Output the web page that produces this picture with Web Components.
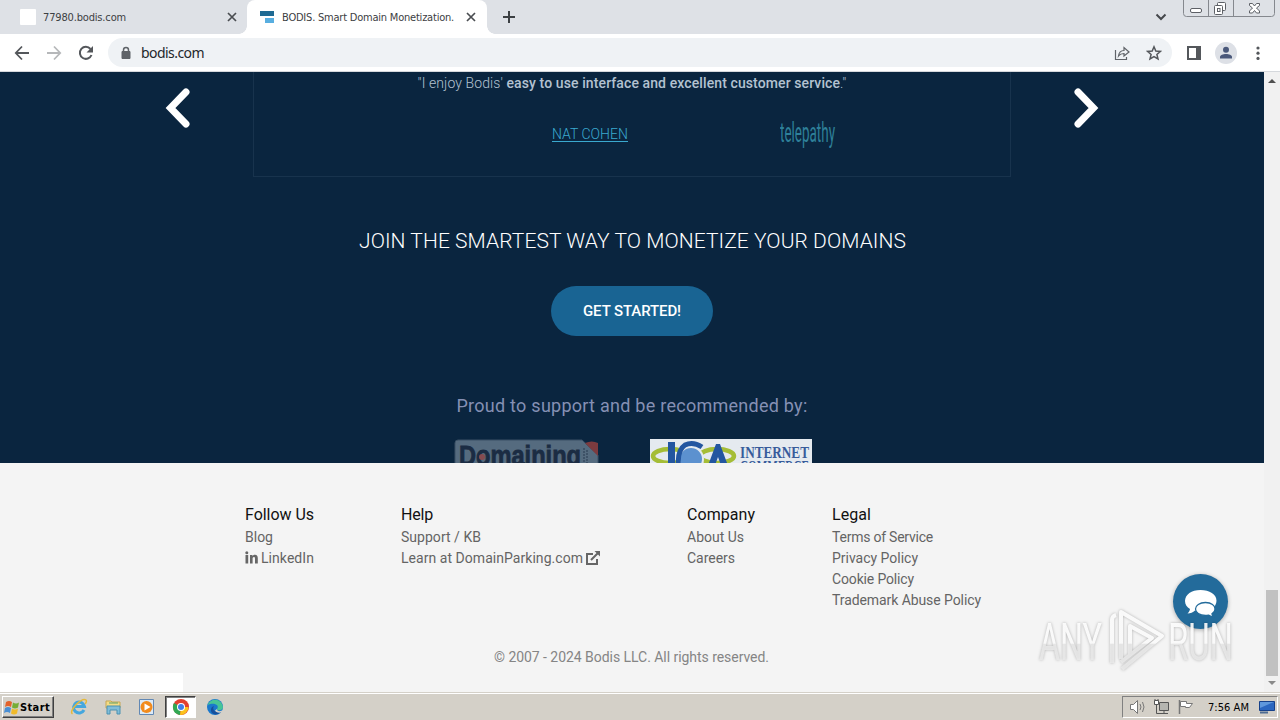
<!DOCTYPE html>
<html lang="en">
<head>
<meta charset="utf-8">
<title>BODIS. Smart Domain Monetization.</title>
<style>
  html, body {
    margin: 0;
    width: 1280px;
    height: 720px;
    overflow: hidden;
  }

  body {
    display: flex;
    flex-direction: column;
    position: relative;
    background: #f4f4f4;
    font-family: Roboto, "Liberation Sans", sans-serif;
  }
</style>
</head>
<body>
  <tab-strip>
    <browser-tab width="247">
      <svg slot="icon" width="16" height="16"><rect width="16" height="16" rx="1" fill="#fff"/></svg>
      <fit-text width="83">77980.bodis.com</fit-text>
    </browser-tab>
    <browser-tab width="240" active>
      <svg slot="icon" width="16" height="16"><path d="M0 2h14v5H0z" fill="#1f6a93"/><path d="M5 9h9v5H5z" fill="#58aee0"/></svg>
      <fit-text width="172">BODIS. Smart Domain Monetization.</fit-text>
    </browser-tab>
  </tab-strip>
  <browser-toolbar><fit-text width="63">bodis.com</fit-text></browser-toolbar>
  <page-view>
    <promo-section></promo-section>
    <page-footer></page-footer>
  </page-view>
  <task-bar></task-bar>
  <chat-button></chat-button>
  <any-run></any-run>

<script>
class BaseElement extends HTMLElement {
  constructor() {
    super();
    const template = document.createElement('template');
    template.innerHTML = this.constructor.markup;
    this.attachShadow({ mode: 'open' });
    this.shadowRoot.appendChild(template.content.cloneNode(true));
  }
}

class TabStrip extends BaseElement {
  static markup = `
<style>
  :host {
    display: flex;
    flex: none;
    height: 34px;
    background: #dee1e6;
    color: #3c4043;
  }
  .plus { margin: 10px 0 0 15px; }
  .right { display: flex; margin-left: auto; padding-right: 5px; }
  .more { margin: 13px 16px 0 0; }
</style>
<slot></slot>
<svg class="plus" width="14" height="14" stroke="#3c4043" stroke-width="2"><path d="M7 1v12M1 7h12"/></svg>
<div class="right">
  <svg class="more" width="12" height="8" fill="none" stroke="#45484c" stroke-width="2"><path d="M1.500 1.500 6 6l4.500-4.500"/></svg>
  <svg width="92" height="17" fill="none" stroke="#85888e">
    <path d="M.5 0v13.500q0 3 3 3h85q3 0 3-3V0M25.500 0v16M50.500 0v16"/>
    <rect x="7.500" y="8.500" width="11" height="4" rx="1.500" fill="#fff" stroke="#5d6066"/>
    <rect x="34.500" y="2.500" width="8" height="8" rx="1" fill="#fff" stroke="#5d6066"/>
    <rect x="31.500" y="5.500" width="8" height="9" rx="1" fill="#fff" stroke="#5d6066"/>
    <rect x="34.500" y="8.500" width="2.500" height="3" stroke="#5d6066"/>
    <path d="M66.500 3.500h3l2 2.500 2-2.500h3v2L73.500 8l3 3v2h-3l-2-2.500-2 2.500h-3v-2l3-3-3-2.500z" fill="#fff" stroke="#5d6066"/>
  </svg>
</div>`;
}

class BrowserTab extends BaseElement {
  static markup = `
<style>
  :host {
    display: flex;
    flex: none;
    align-items: center;
    box-sizing: border-box;
    height: 34px;
    padding: 0 10px 0 20px;
    font: 11px "DejaVu Sans Condensed", sans-serif;
    position: relative;
  }
  :host([active]) {
    padding: 0 10px 0 13px;
    background: #fff;
    border-radius: 8px 8px 0 0;
  }
  /* curved feet of the selected tab */
  :host([active])::before, :host([active])::after {
    content: "";
    position: absolute;
    bottom: 0;
    width: 8px;
    height: 8px;
    left: -8px;
    background: radial-gradient(circle at 0 0, #dee1e6 7.500px, #fff 8px);
  }
  :host([active])::after {
    left: 100%;
    background: radial-gradient(circle at 100% 0, #dee1e6 7.500px, #fff 8px);
  }
  .label { margin-left: 7px; }
  :host([active]) .label { margin-left: 6px; }
  .close { margin-left: auto; }
  :host([active]) .close { margin-right: 1px; }
</style>
<slot name="icon"></slot>
<span class="label"><slot></slot></span>
<svg class="close" width="10" height="10" stroke="#4a4d51" stroke-width="1.700"><path d="M1 1l8 8M9 1 1 9"/></svg>`;

  connectedCallback() {
    this.style.width = this.getAttribute('width') + 'px';
  }
}

class BrowserToolbar extends BaseElement {
  static markup = `
<style>
  :host {
    display: flex;
    flex: none;
    align-items: center;
    box-sizing: border-box;
    height: 38px;
    padding: 0 15px 0 14px;
    background: #fff;
    border-bottom: 1px solid #d5d8dc;
  }
  .nav { display: flex; gap: 16px; }
  .omnibox {
    display: flex;
    flex: 1;
    align-items: center;
    box-sizing: border-box;
    height: 29px;
    margin: 0 15px 0 14px;
    padding: 0 10px 0 13px;
    border-radius: 15px;
    background: #eff2f5;
    color: #24272b;
    font: 14px "Noto Sans", sans-serif;
  }
  .url { flex: 1; margin-left: 10px; }
  .omnibox svg + svg { margin-left: 16px; }
  .actions { display: flex; align-items: center; gap: 14px; }
</style>
<div class="nav">
  <svg width="16" height="16" fill="none" stroke="#54575b" stroke-width="1.800"><path d="M15 8H2M8 1.500 1.800 8 8 14.500"/></svg>
  <svg width="16" height="16" fill="none" stroke="#b6b8ba" stroke-width="1.800"><path d="M1 8h13M8 1.500 14.200 8 8 14.500"/></svg>
  <svg width="16" height="16" fill="none" stroke="#54575b" stroke-width="2"><path d="M13.500 10A6 6 0 1 1 12.500 4"/><path d="M15 1v6.500H8.500z" fill="#54575b" stroke="none"/></svg>
</div>
<div class="omnibox">
  <svg width="10" height="14"><path d="M1 5.500h8v7H1z" fill="#5f6368" stroke="#5f6368" stroke-linejoin="round"/><path d="M2.500 6V4a2.500 2.500 0 0 1 5 0v2" fill="none" stroke="#5f6368" stroke-width="1.500"/></svg>
  <span class="url"><slot></slot></span>
  <svg width="16" height="16" fill="none" stroke="#5f6368" stroke-width="1.200"><path d="M1.500 5v9.500h11V12M4.500 11C5 7 7 5.500 10 5.500V2.500L15 7l-5 4V8.500c-2.500 0-4 .5-5.500 2.500z"/></svg>
  <svg width="16" height="16" fill="none" stroke="#54575b" stroke-width="1.500"><path d="M8 1.800l1.800 4.200 4.600.4-3.500 3 1.100 4.500L8 11.500l-4 2.400 1.100-4.500-3.500-3L6.200 6z"/></svg>
</div>
<div class="actions">
  <svg width="14" height="14"><path d="M1 1h12v12H1z" fill="none" stroke="#54575b" stroke-width="2"/><path d="M9 1h4v12H9z" fill="#54575b"/></svg>
  <svg width="22" height="22"><circle cx="11" cy="11" r="11" fill="#dde0e6"/><circle cx="11" cy="7.800" r="3" fill="#4a587a"/><path d="M5 16.500V15c0-2 3-3 6-3s6 1 6 3v1.500z" fill="#4a587a"/></svg>
  <svg width="14" height="14" fill="#54575b"><circle cx="7" cy="2" r="1.600"/><circle cx="7" cy="7.200" r="1.600"/><circle cx="7" cy="12.400" r="1.600"/></svg>
</div>`;
}

class PageView extends BaseElement {
  static markup = `
<style>
  :host { display: flex; flex: none; height: 620px; }
  .content { display: flex; flex-direction: column; width: 1264px; }
  .scrollbar {
    display: flex;
    flex-direction: column;
    align-items: center;
    width: 16px;
    background: #f1f1f1;
  }
  .up { margin-top: 7px; }
  .thumb { width: 12px; height: 86px; margin-top: 507px; background: #c1c1c1; }
  .down { margin-top: 5px; }
</style>
<div class="content"><slot></slot></div>
<div class="scrollbar">
  <svg class="up" width="8" height="4"><path d="M0 4l4-4 4 4z" fill="#505050"/></svg>
  <div class="thumb"></div>
  <svg class="down" width="8" height="4"><path d="M0 0l4 4 4-4z" fill="#8a8a8a"/></svg>
</div>`;
}

class PromoSection extends BaseElement {
  static markup = `
<style>
  :host {
    display: flex;
    flex-direction: column;
    flex: none;
    align-items: center;
    height: 391px;
    overflow: hidden;
    background: #0a253f;
    color: #fff;
  }
  :host > * { flex: none; }
  .carousel { display: flex; width: 934px; height: 106px; }
  .carousel > svg { flex: none; margin-top: 16px; }
  .card {
    box-sizing: border-box;
    width: 758px;
    height: 105px;
    margin: 0 63px;
    border: 1px solid #18334d;
    border-top: 0;
    text-align: center;
  }
  .quote { height: 22px; font-size: 14px; line-height: 22px; color: #b3c2d1; font-weight: 300; }
  .quote b { font-weight: 500; }
  .author {
    display: flex;
    align-items: center;
    height: 36px;
    padding: 22px 174px 0 298px;
    justify-content: space-between;
    font-size: 14px;
    line-height: 16px;
  }
  .author a { height: 15px; border-bottom: 1px solid #3aa9cf; color: #3aa9cf; font-weight: 300; }
  h2 { margin: 51px 0 0 1px; font-size: 21px; font-weight: 300; line-height: 24px; }
  button {
    width: 162px;
    height: 50px;
    margin: 33px 0 0;
    padding: 0;
    border: 0;
    border-radius: 25px;
    background: #196493;
    color: #fff;
    font: 500 15px Roboto, sans-serif;
  }
  p { margin: 58px 0 0; color: #8590b4; font-size: 18px; line-height: 24px; }
  .badges { display: flex; gap: 50px; margin: 21px 0 0 1px; }
</style>
<div class="carousel">
  <svg width="25" height="40" fill="none" stroke="#fff" stroke-width="7" stroke-linecap="round"><path d="M21 4 5.500 20 21 36"/></svg>
  <div class="card">
    <div class="quote"><fit-text width="429">"I enjoy Bodis' <b>easy to use interface and excellent customer service</b>."</fit-text></div>
    <div class="author">
      <a><fit-text width="76">NAT COHEN</fit-text></a>
      <svg width="56" height="34" font-family="Roboto, sans-serif" fill="#2e8099">
        <text x="0" y="25" font-size="27" textLength="55" lengthAdjust="spacingAndGlyphs">telepathy</text>
      </svg>
    </div>
  </div>
  <svg width="25" height="40" fill="none" stroke="#fff" stroke-width="7" stroke-linecap="round"><path d="M4 4l15.500 16L4 36"/></svg>
</div>
<h2><fit-text width="547">JOIN THE SMARTEST WAY TO MONETIZE YOUR DOMAINS</fit-text></h2>
<button><fit-text width="98">GET STARTED!</fit-text></button>
<p><fit-text width="351">Proud to support and be recommended by:</fit-text></p>
<div class="badges">
  <svg width="146" height="40" font-family="Liberation Sans, sans-serif" font-weight="bold">
    <path d="M1 4q0-3 3-3h124l16 15v30H1z" fill="#556b7f" stroke="#3a5066"/>
    <path d="M131 4q7-3 13 0v13z" fill="#7c3b3f"/>
    <text x="5" y="26" font-size="28" fill="#1b2c43" stroke="#1b2c43" stroke-width=".8" textLength="122" lengthAdjust="spacingAndGlyphs">Domaining</text>
    <circle cx="28" cy="18" r="3" fill="#854b50"/>
    <path d="M130 9v14M133 11v14" stroke="#283a50" stroke-dasharray="2 1"/>
  </svg>
  <svg width="162" height="40" font-family="Liberation Serif, serif" font-weight="bold">
    <path d="M0 0h162v40H0z" fill="#e5eaef"/>
    <g fill="none" stroke="#a5bd36" stroke-width="4.500"><ellipse cx="20" cy="17" rx="17" ry="7"/><ellipse cx="67" cy="17" rx="17" ry="7"/></g>
    <path d="M18 3h7v30h-7z" fill="#2356a0"/>
    <circle cx="41" cy="20" r="12" fill="#5c91cf" stroke="#e5eaef" stroke-width="2"/>
    <path d="M52 8Q43 2 35 6q-9 6-6 25" fill="none" stroke="#2356a0" stroke-width="5"/>
    <path d="M56 32 66 5h4l10 27h-7l-5-14-5 14z" fill="#2356a0"/>
    <g font-size="17" fill="#385c9b"><text x="90" y="19" textLength="69" lengthAdjust="spacingAndGlyphs">INTERNET</text><text x="90" y="33" font-size="16" textLength="69" lengthAdjust="spacingAndGlyphs">COMMERCE</text></g>
  </svg>
</div>`;
}

class PageFooter extends BaseElement {
  static markup = `
<style>
  :host {
    display: flex;
    flex-direction: column;
    flex: 1;
    background: #f4f4f4;
  }
  .columns {
    display: grid;
    grid-template-columns: 156px 286px 145px 1fr;
    height: 143px;
    padding: 41px 0 0 245px;
  }
  .columns svg { margin-top: 3px; }
  .copyright {
    padding-right: 1px;
    text-align: center;
    color: #858585;
    font-size: 14px;
    line-height: 20px;
  }
  .status { width: 183px; height: 19px; margin-top: auto; background: #fff; }
</style>
<div class="columns">
  <link-column>
    <fit-text slot="title" width="69">Follow Us</fit-text>
    <div><fit-text width="28">Blog</fit-text></div>
    <div><svg width="13" height="13" fill="#666"><path d="M.5 4h2.700v8.500H.5zM5 4h2.500v1.200C8.200 4.200 9 3.800 10 3.800c2 0 2.800 1.200 2.800 3.400v5.300H10V7.800c0-1.200-.3-1.800-1.100-1.800-.9 0-1.300.7-1.300 1.800v4.700H5z"/><circle cx="1.800" cy="1.700" r="1.500"/></svg> <fit-text width="53">LinkedIn</fit-text></div>
  </link-column>
  <link-column>
    <fit-text slot="title" width="32">Help</fit-text>
    <div><fit-text width="80">Support / KB</fit-text></div>
    <div><fit-text width="182">Learn at DomainParking.com</fit-text> <svg width="14" height="14" fill="none" stroke="#666" stroke-width="2"><path d="M7 3H1v10h10V8M5 9l7.500-7.500"/><path d="M8.500 0H14v5.500z" fill="#666" stroke="none"/></svg></div>
  </link-column>
  <link-column>
    <fit-text slot="title" width="68">Company</fit-text>
    <div><fit-text width="57">About Us</fit-text></div>
    <div><fit-text width="48">Careers</fit-text></div>
  </link-column>
  <link-column>
    <fit-text slot="title" width="39">Legal</fit-text>
    <div><fit-text width="101">Terms of Service</fit-text></div>
    <div><fit-text width="86">Privacy Policy</fit-text></div>
    <div><fit-text width="82">Cookie Policy</fit-text></div>
    <div><fit-text width="149">Trademark Abuse Policy</fit-text></div>
  </link-column>
</div>
<div class="copyright"><fit-text width="275">© 2007 - 2024 Bodis LLC. All rights reserved.</fit-text></div>
<div class="status"></div>`;
}

class LinkColumn extends BaseElement {
  static markup = `
<style>
  :host { display: block; color: #646464; font-size: 14px; line-height: 21px; }
  .title { height: 23px; color: #111; font-size: 16px; }
  ::slotted(div) { display: flex; gap: 3px; height: 21px; }
  ::slotted(fit-text) { font-size: 16px; }
</style>
<div class="title"><slot name="title"></slot></div>
<slot></slot>`;
}

class TaskBar extends BaseElement {
  static markup = `
<style>
  :host {
    display: flex;
    flex: none;
    align-items: center;
    box-sizing: border-box;
    height: 28px;
    padding: 2px 2px 0 2px;
    background: linear-gradient(#d4d0c8 1px, #fff 1px 2px, #d4d0c8 2px);
    color: #000;
    font: 11px "DejaVu Sans Condensed", sans-serif;
  }
  .start {
    display: flex;
    align-items: center;
    box-sizing: border-box;
    width: 52px;
    height: 22px;
    border: 1px solid;
    border-color: #fff #404040 #404040 #fff;
    box-shadow: inset -1px -1px #808080;
    font-weight: bold;
    padding-left: 1px;
  }
  .apps { display: flex; align-items: center; margin-left: 16px; gap: 16px; }
  .current {
    display: flex;
    align-items: center;
    justify-content: center;
    box-sizing: border-box;
    width: 31px;
    height: 22px;
    margin: 0 -6px 0 -7px;
    background: #fff;
    border: 1px solid;
    border-color: #404040 #fff #fff #404040;
    box-shadow: inset 1px 1px #808080;
  }
  .tray {
    display: flex;
    align-items: center;
    box-sizing: border-box;
    width: 156px;
    height: 22px;
    margin-left: auto;
    padding-left: 5px;
    border: 1px solid;
    border-color: #808080 #fff #fff #808080;
  }
  .tray svg { flex: none; margin-right: 7px; }
  .tray svg:last-child { margin: 0 0 0 10px; }
  .clock { margin-left: 7px; }
</style>
<div class="start">
  <svg width="16" height="16"><path d="M2 3q3-2 6 0L7 8Q4 6 1 8z" fill="#e3632c"/><path d="M9 3.500q3 2 6 0l-1 5q-3 2-6 0z" fill="#76ad36"/><path d="M1 9q3-2 6 0l-1 5q-3-2-6 0z" fill="#4a8fd4"/><path d="M8 9.500q3 2 6 0l-1 5q-3 2-6 0z" fill="#f1bb2a"/></svg>
  <fit-text width="30">Start</fit-text>
</div>
<div class="apps">
  <svg width="18" height="18" fill="none"><path d="M14 12a5.500 5.500 0 1 1 .5-3.500H5" stroke="#45a7de" stroke-width="3"/><path d="M2.500 16C-2 13 12-1 16 2c1 1 0 3-1 4" stroke="#e5b93a" stroke-width="1.500"/></svg>
  <svg width="18" height="18"><path d="M2 3h5l1 1h8v6H2z" fill="#f4dc86" stroke="#c6a653"/><path d="M3 8h13v8h-3v-4H6v4H3z" fill="#80bdd9" stroke="#4b91b1"/><path d="M5 5h9" stroke="#5fa16a"/></svg>
  <svg width="18" height="18"><path d="M1.500 1.500h14v15h-14z" fill="#dceaf7" stroke="#6288b4"/><circle cx="8.500" cy="9" r="6" fill="#f28b1d"/><path d="M6.500 5.500v7l6-3.500z" fill="#fff"/></svg>
  <div class="current"><svg width="18" height="18"><circle cx="9" cy="9" r="8" fill="#e2402f"/><path d="M9 9 2 5a8 8 0 0 0 6 12z" fill="#31a853"/><path d="M9 9h7.500A8 8 0 0 1 8 17z" fill="#fbc21c"/><path d="M9 5h7l.8 4H9z" fill="#e2402f"/><circle cx="9" cy="9" r="4" fill="#fff"/><circle cx="9" cy="9" r="3" fill="#3f7ee8"/></svg></div>
  <svg width="18" height="18"><circle cx="9" cy="9" r="8" fill="#1a78cc"/><path d="M1.500 7a8 8 0 0 1 15.500 2c0 4-6 4-6 2 3-4-3-7-9.500-4z" fill="#47c497"/><path d="M8 8c-2 3 0 7 7 6-3 3-7 3-9 1-2-3-1-6 2-7z" fill="#174f9c"/><path d="M11 11c0 3 4 2.500 6 1l-1.500 2.500c-4 .5-6-.5-6.500-2z" fill="#d4d0c8"/></svg>
</div>
<div class="tray">
  <svg width="18" height="18" fill="none" stroke="#777"><path d="M2.500 6.500h3l4-4v13l-4-4h-3z" fill="#fff"/><path d="M12 6q2 3 0 6M14.500 4q3 5 0 10"/></svg>
  <svg width="17" height="18" fill="none" stroke="#555"><path d="M6.500 4.500h9v8h-9z" fill="#b5b5b0"/><path d="M11 13v2.500M7 15.500h8M3.500 7v8.500h4M2 1v2M5 1v2"/><path d="M1.500 2.500h4v4h-4z" fill="#fff"/></svg>
  <svg width="17" height="18" fill="none" stroke="#777"><path d="M2.500 2v14" stroke-width="1.500"/><path d="M3.500 3.500h6v2h6l-3 4h-4v-1h-5z" fill="#fff"/></svg>
  <fit-text class="clock" width="41">7:56 AM</fit-text>
  <svg width="16" height="14"><path d="M.5 1.500h15v9H.5z" fill="#2b67c0" stroke="#16418a"/><path d="M1 2h14L1 8z" fill="#5f98dc"/><path d="M1 12.500h8" stroke="#4e6c92" stroke-width="2"/></svg>
</div>`;
}

class ChatButton extends BaseElement {
  static markup = `
<style>
  :host {
    position: absolute;
    left: 1173px;
    top: 574px;
    width: 55px;
    height: 55px;
    border-radius: 50%;
    background: #236b9b;
    box-shadow: 0 1px 4px rgba(0, 0, 0, .3);
  }
</style>
<svg width="55" height="55" fill="#fff">
  <path d="M27.500 16c-9 0-15.500 4.500-15.500 11 0 3.500 2 6.500 5 8-.3 2-1.500 3.500-2.500 4.500 3 0 5.500-1 7.500-3 1.500.5 3.500.7 5.500.7 9 0 16-4 16-10.500S36.500 16 27.500 16z"/>
  <path d="M32.500 28.500c-6 0-10 3-10 6.500s4 6.500 10 6.500c1 0 2-.2 3-.4 1.500 1 3 1.700 5 1.700-1-1-1.500-2-1.600-3 2-1 3.100-2.800 3.100-4.800 0-3.500-3.500-6.500-9.500-6.500z" stroke="#236b9b" stroke-width="1.300"/>
</svg>`;
}

class AnyRun extends BaseElement {
  static markup = `
<style>
  :host {
    position: absolute;
    left: 1034px;
    top: 606px;
    width: 204px;
    height: 70px;
    pointer-events: none;
    filter: drop-shadow(0 0 1.500px rgba(0, 0, 0, .3));
  }
</style>
<svg width="204" height="70">
  <defs><linearGradient id="shade" gradientUnits="userSpaceOnUse" x1="0" y1="0" x2="0" y2="70">
    <stop offset=".53" stop-color="#fff" stop-opacity=".9"/><stop offset=".55" stop-color="#eaeaea" stop-opacity=".85"/>
  </linearGradient></defs>
  <g font-family="Roboto, sans-serif" font-size="51" fill="url(#shade)">
    <text x="5" y="54" textLength="63" lengthAdjust="spacingAndGlyphs">ANY</text>
    <text x="134" y="54" textLength="65" lengthAdjust="spacingAndGlyphs">RUN</text>
  </g>
  <g fill="none" stroke="url(#shade)" stroke-width="4" stroke-linejoin="round">
    <path d="M78 57V14q0-4 4-5M87 53V6l41 24-40 33M96 50V20l22 12-31 24"/>
  </g>
</svg>`;
}

// Inline text that spreads its letters over the width given in the attribute
class FitText extends BaseElement {
  static markup = `
<style>
  :host { display: inline-block; white-space: nowrap; }
</style>
<slot></slot>`;

  connectedCallback() {
    const width = Number(this.getAttribute('width'));
    const natural = this.getBoundingClientRect().width;
    this.style.letterSpacing = (width - natural) / this.textContent.length + 'px';
    this.style.width = width + 'px';
  }
}

customElements.define('tab-strip', TabStrip);
customElements.define('browser-tab', BrowserTab);
customElements.define('browser-toolbar', BrowserToolbar);
customElements.define('page-view', PageView);
customElements.define('promo-section', PromoSection);
customElements.define('page-footer', PageFooter);
customElements.define('link-column', LinkColumn);
customElements.define('task-bar', TaskBar);
customElements.define('chat-button', ChatButton);
customElements.define('any-run', AnyRun);
// last, so that the text is measured in its final font
customElements.define('fit-text', FitText);
</script>
</body>
</html>
